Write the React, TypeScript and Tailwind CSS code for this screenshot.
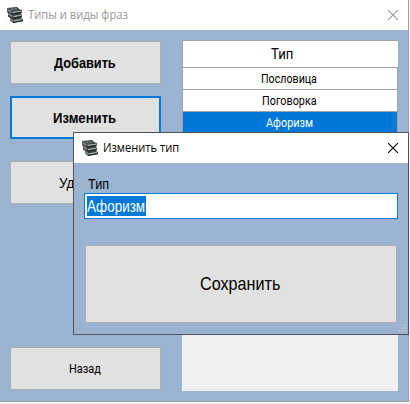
import { useLayoutEffect, useRef, useState } from 'react';

type LabelProps = { text: string; width: number; className?: string };

/** A single line of text condensed or widened to an exact width. */
function Label({ text, width, className = '' }: LabelProps) {
  const ref = useRef<HTMLSpanElement>(null);
  const [scale, setScale] = useState(1);
  useLayoutEffect(() => {
    if (ref.current) setScale(width / ref.current.offsetWidth);
  }, [width, text]);
  return (
    <span className={`block whitespace-nowrap ${className}`} style={{ width }}>
      <span ref={ref} className="inline-block origin-left align-top" style={{ transform: `scaleX(${scale})` }}>
        {text}
      </span>
    </span>
  );
}

function Books({ className = '' }: { className?: string }) {
  return (
    <svg viewBox="0 0 16 16" className={`h-4 w-4 shrink-0 ${className}`}>
      <path d="M0 1 L10 0 L13 2.5 L15 3 V5 L14 6 L15 8 V10 L14 11 L16 12 V14 L6 16 L3 13.5 L3 11 L1 9.5 L1 6.5 L0 4.5Z" fill="#3a3f40" />
      <path d="M1 1.5 L9 .5 L12 2.5 L5 4Z" fill="#5b6363" />
      <path d="M0 1.2 L4.5 4.2 V6.2 L.5 3.8Z M1.2 5.7 L5 8 V10.2 L1.2 7.8Z M3 10.7 L6 12.8 V15 L3 12.8Z" fill="#7e8887" />
      <path d="M5.5 4.8 L14.5 3.4 V4.7 L5.5 6.3Z M6 9 L14.5 7.5 V8.9 L6 10.4Z M6.5 13.3 L15 11.8 V13 L6.5 14.7Z" fill="#9fb0ac" />
      <path d="M5 6.9 L14.5 5.4 M6 11 L14.5 9.5 M6 15.5 L15.5 13.8" stroke="#151919" strokeWidth=".9" />
    </svg>
  );
}

function Close({ className = '' }: { className?: string }) {
  return (
    <svg viewBox="0 0 10 10" className={`h-[10px] w-[10px] shrink-0 ${className}`}>
      <path d="M0 0 L10 10 M10 0 L0 10" stroke="currentColor" strokeWidth="1.1" />
    </svg>
  );
}

function Grip() {
  return (
    <svg viewBox="0 0 8 8" className="absolute right-[2px] bottom-[2px] h-2 w-2" shapeRendering="crispEdges">
      <path d="M6 0h2v2h-2z M3 3h2v2h-2z M6 3h2v2h-2z M0 6h2v2h-2z M3 6h2v2h-2z M6 6h2v2h-2z" fill="#bfbfbf" />
    </svg>
  );
}

const button = 'flex h-[43px] w-[151px] shrink-0 items-center justify-center bg-[#e1e1e1] pr-[2px] text-black';
const row = 'flex h-[22px] shrink-0 items-center justify-center border-r border-b border-l border-[#a0a0a0] pr-[2px]';

function EditDialog() {
  return (
    <section className="absolute top-[132px] left-[73px] flex h-[203px] w-[336px] flex-col border border-[#4d5660] bg-[#99b3d1]">
      <header className="flex h-[30px] shrink-0 items-center bg-white pr-[10px] pl-2 text-black">
        <Books />
        <Label text="Изменить тип" width={76} className="ml-[5px] font-['Open_Sans',sans-serif] text-[12px] leading-4" />
        <Close className="ml-auto" />
      </header>
      <div className="flex flex-col px-[10px] pt-[12px]">
        <Label text="Тип" width={21} className="ml-[4px] h-[18px] font-['Liberation_Sans',sans-serif] text-[15px] leading-[18px] text-black" />
        <div className="flex h-[26px] w-[314px] items-center border border-[#0078d7] bg-white pl-[2px]">
          <div className="h-5 w-[59px] bg-[#0078d7]">
            <Label text="Афоризм" width={58} className="font-['Liberation_Sans',sans-serif] text-[16px] leading-[21px] text-white" />
          </div>
        </div>
        <button className="mt-[26px] ml-px flex h-[78px] w-[312px] items-center justify-center border border-[#adadad] bg-[#e1e1e1] pr-[3px] text-black">
          <Label text="Сохранить" width={80} className="font-['Liberation_Sans',sans-serif] text-[19px] leading-5" />
        </button>
      </div>
      <Grip />
    </section>
  );
}

export default function App() {
  return (
    <div className="relative h-[404px] w-[410px] overflow-hidden bg-[#f5f5f5]">
      <main className="flex h-[402px] w-[409px] flex-col border-r border-b border-[#a0a0a0] bg-[#99b3d1]">
        <header className="flex h-[30px] shrink-0 items-center bg-white pr-[10px] pl-[7px] text-[#999]">
          <Books />
          <Label text="Типы и виды фраз" width={100} className="ml-[5px] font-['Open_Sans',sans-serif] text-[12px] leading-4" />
          <Close className="ml-auto" />
        </header>
        <div className="flex pl-[10px]">
          <nav className="flex w-[151px] flex-col pt-[11px]">
            <button className={`${button} border border-[#adadad]`}>
              <Label text="Добавить" width={62} className="font-['Liberation_Sans',sans-serif] text-[15px] leading-5 font-bold" />
            </button>
            <button className={`${button} mt-3 border-2 border-[#0078d7]`}>
              <Label text="Изменить" width={63} className="font-['Liberation_Sans',sans-serif] text-[15px] leading-5 font-bold" />
            </button>
            <button className={`${button} mt-[22px] border border-[#adadad]`}>
              <Label text="Удалить" width={51} className="font-['Liberation_Sans',sans-serif] text-[15px] leading-5" />
            </button>
            <button className={`${button} mt-[143px] border border-[#adadad]`}>
              <Label text="Назад" width={32} className="font-['Roboto',sans-serif] text-[12px] leading-4" />
            </button>
          </nav>
          <div className="mt-[10px] ml-[21px] flex h-[351px] w-[216px] flex-col border-t border-[#a0a0a0] bg-[#f0f0f0] font-['Roboto',sans-serif] text-[12px] text-black">
            <div className="flex h-[27px] shrink-0 items-center justify-center border-b border-l border-[#a0a0a0] bg-white pr-[18px]">
              <Label text="Тип" width={22} className="text-[15px] leading-5" />
            </div>
            <div className={`${row} bg-white`}>
              <Label text="Пословица" width={56} />
            </div>
            <div className={`${row} bg-white`}>
              <Label text="Поговорка" width={55} />
            </div>
            <div className={`${row} bg-[#0078d7] text-white`}>
              <Label text="Афоризм" width={47} />
            </div>
          </div>
        </div>
      </main>
      <EditDialog />
    </div>
  );
}
